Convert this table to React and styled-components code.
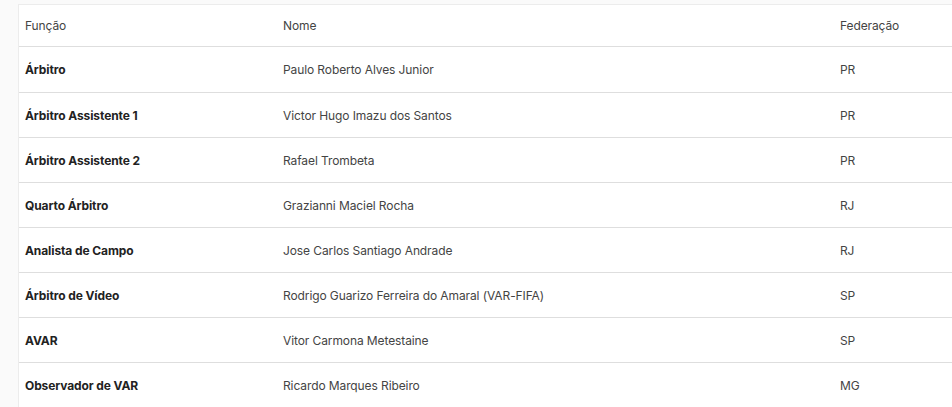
import React from 'react';
import styled, { createGlobalStyle } from 'styled-components';

const GlobalStyle = createGlobalStyle`
  body {
    margin: 0;
    background: #fafafa;
    font-family: Inter, "Liberation Sans", sans-serif;
  }
`;

const rows = [
  { role: 'Árbitro', name: 'Paulo Roberto Alves Junior', fed: 'PR' },
  { role: 'Árbitro Assistente 1', name: 'Victor Hugo Imazu dos Santos', fed: 'PR' },
  { role: 'Árbitro Assistente 2', name: 'Rafael Trombeta', fed: 'PR' },
  { role: 'Quarto Árbitro', name: 'Grazianni Maciel Rocha', fed: 'RJ' },
  { role: 'Analista de Campo', name: 'Jose Carlos Santiago Andrade', fed: 'RJ' },
  { role: 'Árbitro de Vídeo', name: 'Rodrigo Guarizo Ferreira do Amaral (VAR-FIFA)', fed: 'SP' },
  { role: 'AVAR', name: 'Vitor Carmona Metestaine', fed: 'SP' },
  { role: 'Observador de VAR', name: 'Ricardo Marques Ribeiro', fed: 'MG' },
];

function App() {
  return (
    <>
      <GlobalStyle />
      <Page>
        <Card>
          <Table>
            <colgroup>
              <col style={{ width: 258 }} />
              <col style={{ width: 557 }} />
              <col />
            </colgroup>
            <thead>
              <tr>
                <Head>Função</Head>
                <Head>Nome</Head>
                <Head>Federação</Head>
              </tr>
            </thead>
            <tbody>
              {rows.map((r) => (
                <Row key={r.role}>
                  <Cell bold>{r.role}</Cell>
                  <Cell>{r.name}</Cell>
                  <Cell>{r.fed}</Cell>
                </Row>
              ))}
            </tbody>
          </Table>
        </Card>
      </Page>
    </>
  );
}

const Page = styled.div`
  padding: 4px 0 0 18px;
`;

const Card = styled.div`
  background: #fff;
  border-left: 1px solid #ececec;
  border-top: 1px solid #ececec;
`;

const Table = styled.table`
  width: 100%;
  border-collapse: collapse;
  table-layout: fixed;
  font-size: 12px;
  letter-spacing: -0.1px;
`;

const Head = styled.th`
  text-align: left;
  font-weight: 400;
  color: #444;
  height: 41px;
  padding: 0 0 0 6px;
  border-bottom: 1px solid #dedede;
`;

const Row = styled.tr`
  height: 45px;
  border-bottom: 1px solid #dedede;
  &:first-child {
    height: 46px;
  }
  &:last-child {
    border-bottom: none;
  }
`;

const Cell = styled.td`
  padding: 0 0 0 6px;
  color: ${(p) => (p.bold ? '#222' : '#444')};
  font-weight: ${(p) => (p.bold ? 700 : 400)};
`;

export default App;
